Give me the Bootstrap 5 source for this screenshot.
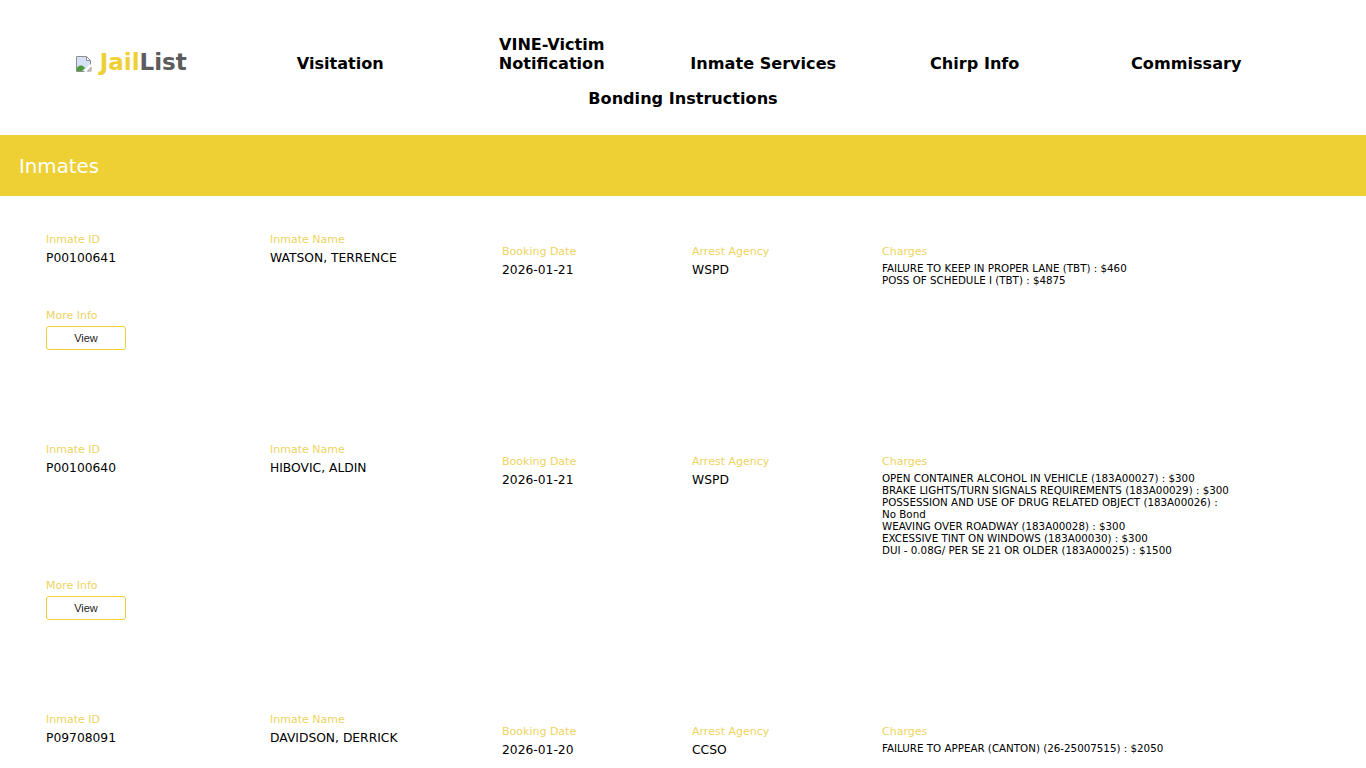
<!DOCTYPE html>
<html lang="en">
<head>
    <meta charset="UTF-8">
    <meta name="viewport" content="width=device-width, initial-scale=1.0">
    <title>Inmates</title>
    <link href="https://cdn.jsdelivr.net/npm/bootstrap@5.3.0/dist/css/bootstrap.min.css" rel="stylesheet">
    <style>
        body { font-family: "DejaVu Sans", Verdana, sans-serif; color: #000; background: #fff; }
        .site-head { padding: 26px 0 0 23px; height: 135px; }
        .head-item { width: 211.5px; text-align: center; font-size: 16.1px; font-weight: 700; line-height: 19px; color: #000; text-decoration: none; }
        .head-row { height: 47px; }
        .head-second { margin-left: -23px; padding-top: 16px; }
        .brand-link { font-size: 23px; line-height: 21px; color: #5c5c5c; padding-left: 5px; }
        .brand-link span { color: #eed035; }
        .brand-icon { width: 16px; height: 16px; vertical-align: -2px; }
        .title-bar { background: #eed035; height: 61px; padding: 2px 19px 0; }
        .title-bar h1 { font-size: 19.8px; font-weight: 400; color: #fff; margin: 0; }
        .inmate-row { padding: 36px 0 0 46px; }
        .cell-id { width: 224px; }
        .cell-name { width: 232px; }
        .cell-small { width: 190px; padding-top: 12px; }
        .cell-charges { width: 352px; padding-top: 12px; }
        .cell-more { width: 100%; padding-top: 21px; height: 119px; }
        .cell-label { font-size: 11px; line-height: 15px; color: #eed35f; margin-bottom: 2px; }
        .cell-value { font-size: 12.3px; line-height: 18px; }
        .charge-list { font-size: 10.3px; line-height: 12px; margin-top: 3px; padding-bottom: 1px; }
        .view-btn { width: 80px; height: 24px; padding: 0; font-family: "Liberation Sans", Arial, sans-serif; font-size: 11px; line-height: 22px; color: #222; background: #fff; border: 1px solid #eed035; border-radius: 3px; }
    </style>
</head>
<body>
<div class="site-head">
    <div class="d-flex align-items-end head-row">
        <a href="#" class="head-item brand-link"><svg class="brand-icon" viewBox="0 0 16 16"><path d="M1 1h9v4h4v3l-6 7H1z" fill="#d4e0f3"/><path d="M1 15v-3c2-3 5-3 7-1l1 1-3 3z" fill="#4c9a3a"/><path d="M8.5 15.5H.5V.5h10l4 4v4M10.5.5v4h4" fill="none" stroke="#8f8f8f"/><path d="M10.5 15.5h5v-5z" fill="#8f8f8f"/><path d="M12.5 14.5h2v-2z" fill="#fff"/></svg> <span>Jail</span>List</a>
        <a href="#" class="head-item">Visitation</a>
        <a href="#" class="head-item">VINE-Victim Notification</a>
        <a href="#" class="head-item">Inmate Services</a>
        <a href="#" class="head-item">Chirp Info</a>
        <a href="#" class="head-item">Commissary</a>
    </div>
    <div class="d-flex justify-content-center head-second">
        <a href="#" class="head-item">Bonding Instructions</a>
    </div>
</div>
<div class="title-bar d-flex align-items-center"><h1>Inmates</h1></div>

<div class="inmate-row d-flex flex-wrap align-items-start">
    <div class="cell-id"><div class="cell-label">Inmate ID</div><div class="cell-value">P00100641</div></div>
    <div class="cell-name"><div class="cell-label">Inmate Name</div><div class="cell-value">WATSON, TERRENCE</div></div>
    <div class="cell-small"><div class="cell-label">Booking Date</div><div class="cell-value">2026-01-21</div></div>
    <div class="cell-small"><div class="cell-label">Arrest Agency</div><div class="cell-value">WSPD</div></div>
    <div class="cell-charges"><div class="cell-label">Charges</div>
        <div class="charge-list">FAILURE TO KEEP IN PROPER LANE (TBT) : $460<br>POSS OF SCHEDULE I (TBT) : $4875</div></div>
    <div class="cell-more"><div class="cell-label">More Info</div><button type="button" class="btn view-btn">View</button></div>
</div>

<div class="inmate-row d-flex flex-wrap align-items-start">
    <div class="cell-id"><div class="cell-label">Inmate ID</div><div class="cell-value">P00100640</div></div>
    <div class="cell-name"><div class="cell-label">Inmate Name</div><div class="cell-value">HIBOVIC, ALDIN</div></div>
    <div class="cell-small"><div class="cell-label">Booking Date</div><div class="cell-value">2026-01-21</div></div>
    <div class="cell-small"><div class="cell-label">Arrest Agency</div><div class="cell-value">WSPD</div></div>
    <div class="cell-charges"><div class="cell-label">Charges</div>
        <div class="charge-list">OPEN CONTAINER ALCOHOL IN VEHICLE (183A00027) : $300<br>BRAKE LIGHTS/TURN SIGNALS REQUIREMENTS (183A00029) : $300<br>POSSESSION AND USE OF DRUG RELATED OBJECT (183A00026) : No Bond<br>WEAVING OVER ROADWAY (183A00028) : $300<br>EXCESSIVE TINT ON WINDOWS (183A00030) : $300<br>DUI - 0.08G/ PER SE 21 OR OLDER (183A00025) : $1500</div></div>
    <div class="cell-more"><div class="cell-label">More Info</div><button type="button" class="btn view-btn">View</button></div>
</div>

<div class="inmate-row d-flex flex-wrap align-items-start">
    <div class="cell-id"><div class="cell-label">Inmate ID</div><div class="cell-value">P09708091</div></div>
    <div class="cell-name"><div class="cell-label">Inmate Name</div><div class="cell-value">DAVIDSON, DERRICK</div></div>
    <div class="cell-small"><div class="cell-label">Booking Date</div><div class="cell-value">2026-01-20</div></div>
    <div class="cell-small"><div class="cell-label">Arrest Agency</div><div class="cell-value">CCSO</div></div>
    <div class="cell-charges"><div class="cell-label">Charges</div>
        <div class="charge-list">FAILURE TO APPEAR (CANTON) (26-25007515) : $2050</div></div>
    <div class="cell-more"><div class="cell-label">More Info</div><button type="button" class="btn view-btn">View</button></div>
</div>
<script src="https://cdn.jsdelivr.net/npm/bootstrap@5.3.0/dist/js/bootstrap.bundle.min.js"></script>
</body>
</html>
